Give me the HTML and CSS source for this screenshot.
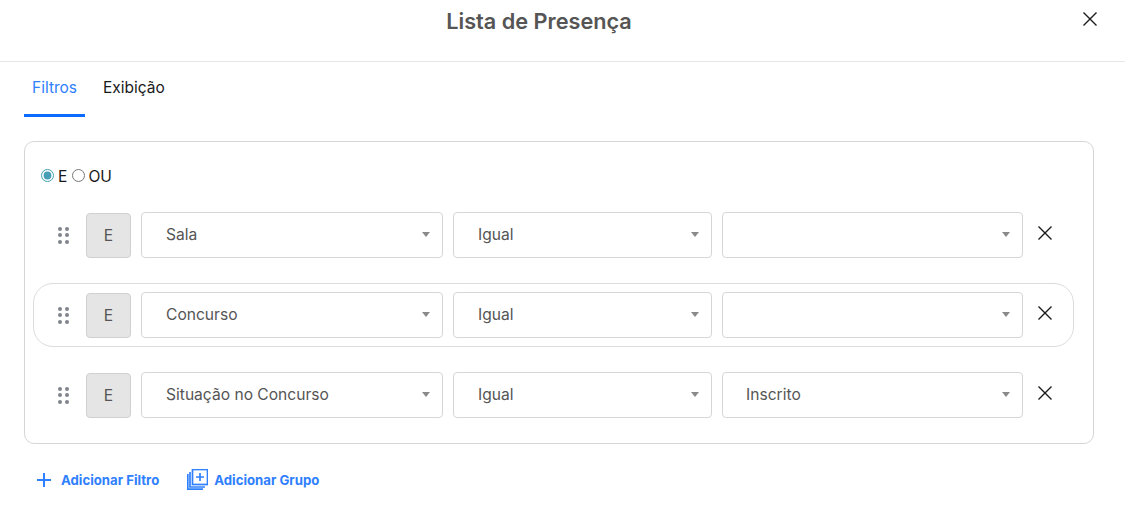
FILE: index.html
```html
<!DOCTYPE html>
<html lang="pt-BR">
<head>
    <meta charset="UTF-8">
    <title>Lista de Presença</title>
    <link rel="stylesheet" href="styles.css">
</head>
<body>
    <header class="modal-header">
        <h1>Lista de Presença</h1>
        <button type="button" class="close-btn" aria-label="Fechar">
            <svg width="16" height="16" viewBox="0 0 16 16"><path d="M1.5 1.5l13 13M14.5 1.5l-13 13"/></svg>
        </button>
    </header>

    <nav class="tabs">
        <a class="tab active">Filtros</a>
        <a class="tab">Exibição</a>
    </nav>

    <section class="filter-card">
        <div class="logic">
            <input type="radio" name="logic" id="logic-e" checked>
            <label for="logic-e">E</label>
            <input type="radio" name="logic" id="logic-ou">
            <label for="logic-ou">OU</label>
        </div>

        <div class="filter-row">
            <span class="drag"><i></i><i></i><i></i><i></i><i></i><i></i></span>
            <span class="logic-box">E</span>
            <div class="select select-field">Sala</div>
            <div class="select select-op">Igual</div>
            <div class="select select-value"></div>
            <button type="button" class="remove-btn" aria-label="Remover">
                <svg width="16" height="16" viewBox="0 0 16 16"><path d="M1.5 1.5l13 13M14.5 1.5l-13 13"/></svg>
            </button>
        </div>

        <div class="filter-row outlined">
            <span class="drag"><i></i><i></i><i></i><i></i><i></i><i></i></span>
            <span class="logic-box">E</span>
            <div class="select select-field">Concurso</div>
            <div class="select select-op">Igual</div>
            <div class="select select-value"></div>
            <button type="button" class="remove-btn" aria-label="Remover">
                <svg width="16" height="16" viewBox="0 0 16 16"><path d="M1.5 1.5l13 13M14.5 1.5l-13 13"/></svg>
            </button>
        </div>

        <div class="filter-row">
            <span class="drag"><i></i><i></i><i></i><i></i><i></i><i></i></span>
            <span class="logic-box">E</span>
            <div class="select select-field">Situação no Concurso</div>
            <div class="select select-op">Igual</div>
            <div class="select select-value">Inscrito</div>
            <button type="button" class="remove-btn" aria-label="Remover">
                <svg width="16" height="16" viewBox="0 0 16 16"><path d="M1.5 1.5l13 13M14.5 1.5l-13 13"/></svg>
            </button>
        </div>
    </section>

    <div class="actions">
        <a class="action action-filter">
            <svg width="16" height="16" viewBox="0 0 16 16"><path d="M8 1v14M1 8h14"/></svg>
            Adicionar Filtro
        </a>
        <a class="action">
            <svg width="21" height="21" viewBox="0 0 21 21">
                <rect x="5.5" y="0.5" width="15" height="15"/>
                <path d="M13 4v8M9 8h8"/>
                <path d="M3 3v15h15"/>
                <path d="M0.8 5v15.2H16"/>
            </svg>
            Adicionar Grupo
        </a>
    </div>
</body>
</html>
```

FILE: styles.css
```css
body {
    margin: 0;
    background-color: #fff;
    font-family: Inter, "Liberation Sans", sans-serif;
    color: #1a1a1a;
}

button {
    background: none;
    border: none;
    padding: 0;
    cursor: pointer;
}

svg {
    display: block;
    fill: none;
    stroke: currentColor;
    stroke-width: 1.4;
}

.modal-header {
    display: flex;
    align-items: flex-start;
    height: 61px;
    padding-right: 23px;
    border-bottom: 1px solid #e6e6e6;
}

.modal-header h1 {
    flex: 1;
    margin: 0;
    padding-top: 7px;
    text-align: center;
    font-size: 21.7px;
    line-height: 28px;
    font-weight: 600;
    color: #555;
}

.close-btn {
    width: 24px;
    height: 24px;
    margin-top: 7px;
    display: flex;
    align-items: center;
    justify-content: center;
    color: #1a1a1a;
}

.tabs {
    display: flex;
    gap: 2px;
    margin: 0 24px;
    height: 55px;
}

.tab {
    padding: 0 8px;
    height: 52px;
    line-height: 52px;
    font-size: 15.5px;
    color: #1a1a1a;
}

.tab + .tab {
    margin-left: 8px;
}

.tab.active {
    color: #2f80ff;
    border-bottom: 3px solid #0a6cff;
}

.filter-card {
    width: 1068px;
    height: 301px;
    margin: 24px 0 0 24px;
    border: 1px solid #d6d6d6;
    border-radius: 10px;
}

.logic {
    display: flex;
    align-items: center;
    gap: 4px;
    height: 20px;
    margin: 24px 0 0 16px;
    font-size: 15.6px;
}

.logic input {
    margin: -1px 0 0;
    width: 13px;
    height: 13px;
    accent-color: #469fb5;
}

.logic #logic-ou {
    margin-left: 1px;
    margin-right: -1px;
}

.filter-row {
    display: flex;
    align-items: center;
    width: 1039px;
    height: 62px;
    margin: 17px 0 16px 8px;
    border: 1px solid transparent;
    border-radius: 20px;
}

.filter-row + .filter-row {
    margin-top: 16px;
}

.filter-row.outlined {
    border-color: #dcdcdc;
}

.drag {
    display: grid;
    grid-template-columns: 4px 4px;
    gap: 2.5px 3.5px;
    width: 11.5px;
    margin: 0 17px 0 23.5px;
}

.drag i {
    width: 4px;
    height: 4px;
    border-radius: 50%;
    background-color: #80858c;
}

.logic-box {
    box-sizing: border-box;
    width: 45px;
    height: 45px;
    margin: 1px 10px 0 0;
    border: 1px solid #d0d0d0;
    border-radius: 4px;
    background-color: #e5e5e5;
    text-align: center;
    line-height: 43px;
    font-size: 15.6px;
    color: #555;
}

.select {
    position: relative;
    box-sizing: border-box;
    height: 46px;
    padding-left: 24px;
    margin-right: 10px;
    border: 1px solid #d6d6d6;
    border-radius: 4px;
    line-height: 44px;
    font-size: 15.6px;
    color: #555;
}

.select::after {
    content: "";
    position: absolute;
    right: 12px;
    top: 19px;
    border-left: 4px solid transparent;
    border-right: 4px solid transparent;
    border-top: 5px solid #8a8a8a;
}

.select-field {
    width: 302px;
}

.select-op {
    width: 259px;
}

.select-value {
    width: 301px;
    margin-right: 14px;
    padding-left: 23px;
}

.remove-btn {
    margin-bottom: 4px;
    color: #1a1a1a;
}

.actions {
    display: flex;
    align-items: center;
    gap: 28px;
    margin: 25px 0 0 36px;
    font-size: 13.2px;
    font-weight: 700;
    color: #2f80ff;
}

.action {
    display: flex;
    align-items: center;
    gap: 6px;
}

.action-filter {
    gap: 9px;
}

.action svg {
    stroke-width: 1.7;
}

.action-filter svg {
    stroke-width: 2;
}
```
